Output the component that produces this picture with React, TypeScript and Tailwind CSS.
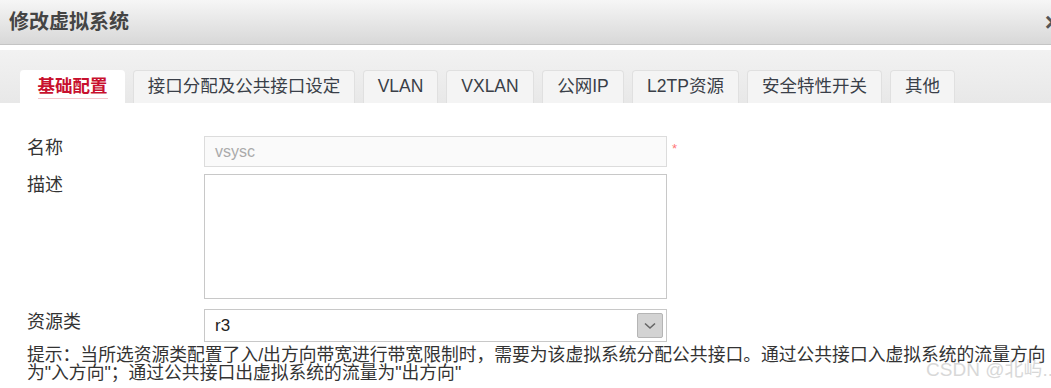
import React from 'react'

const tabs = ['基础配置', '接口分配及公共接口设定', 'VLAN', 'VXLAN', '公网IP', 'L2TP资源', '安全特性开关', '其他']
const tabWidths = ['w-[105px]', 'w-[222px]', 'w-[75px]', 'w-[88px]', 'w-[82px]', 'w-[107px]', 'w-[135px]', 'w-[65px]']

export default function App() {
  return (
    <div
      className="w-[1051px] h-[388px] overflow-hidden bg-white text-[#333] relative"
      style={{ fontFamily: '"Liberation Sans", "Noto Sans CJK SC", sans-serif' }}
    >
      {/* 标题栏 */}
      <div className="h-[45px] flex items-center justify-between bg-gradient-to-b from-[#f6f6f6] to-[#d8d8d8] border-b border-[#c4c4c4] overflow-hidden">
        <span className="pl-[9px] text-[20px] font-bold text-[#444] leading-none">修改虚拟系统</span>
        <span className="mr-[-9px] text-[26px] font-bold text-[#555] leading-none">×</span>
      </div>

      {/* 标签栏 */}
      <div className="mt-[5px] h-[53px] bg-gradient-to-b from-[#f2f2f2] to-[#e8e8e8] flex items-end pl-[20px] gap-[8px]">
        {tabs.map((t, i) => (
          <div
            key={t}
            className={`${tabWidths[i]} h-[33px] rounded-t-[4px] flex items-center justify-center text-[17.5px] leading-none ${
              i === 0
                ? 'bg-white text-[#c8102e] font-bold'
                : 'bg-[#f4f4f4] border border-b-0 border-[#e0e0e0] text-[#3a3f48]'
            }`}
          >
            {i === 0 ? (
              <span className="border-b border-[#f3c6cc] pb-[3px] mt-[4px]">{t}</span>
            ) : (
              t
            )}
          </div>
        ))}
      </div>

      {/* 表单 */}
      <div className="pl-[27px] pt-[33px]">
        <div className="flex items-start">
          <div className="w-[177px] mt-[3px] text-[18px] leading-[18px]">名称</div>
          <div className="w-[463px] h-[31px] border border-[#dcdcdc] bg-[#fafafa] flex items-center pl-[10px] text-[16px] text-[#aaa]">
            vsysc
          </div>
          <span className="ml-[5px] mt-[6px] text-[13px] leading-none text-[#f77]">*</span>
        </div>

        <div className="flex items-start mt-[7px]">
          <div className="w-[177px] mt-[2px] text-[18px] leading-[18px]">描述</div>
          <div className="w-[463px] h-[125px] border border-[#c8c8c8] bg-white" />
        </div>

        <div className="flex items-start mt-[10px]">
          <div className="w-[177px] mt-[4px] text-[18px] leading-[18px]">资源类</div>
          <div className="w-[463px] h-[33px] border border-[#c8c8c8] bg-white flex items-center justify-between pl-[10px] pr-[3px]">
            <span className="text-[17px] text-[#222]">r3</span>
            <div className="w-[26px] h-[25px] bg-[#d3d3d3] border border-[#b5b5b5] rounded-[2px] flex items-center justify-center">
              <svg width="14" height="8" viewBox="0 0 14 8">
                <path d="M2 1.5 L7 6 L12 1.5" fill="none" stroke="#666" strokeWidth="1.6" />
              </svg>
            </div>
          </div>
        </div>

        <p className="mt-[4px] text-[17.8px] leading-[18px] text-[#333] whitespace-nowrap">
          提示：当所选资源类配置了入/出方向带宽进行带宽限制时，需要为该虚拟系统分配公共接口。通过公共接口入虚拟系统的流量方向
          <br />
          为"入方向"；通过公共接口出虚拟系统的流量为"出方向"
        </p>
      </div>

      <span className="absolute right-[-2px] top-[360px] text-[19px] leading-none text-[#cfcfcf] opacity-80">
        CSDN @北屿..
      </span>
    </div>
  )
}
